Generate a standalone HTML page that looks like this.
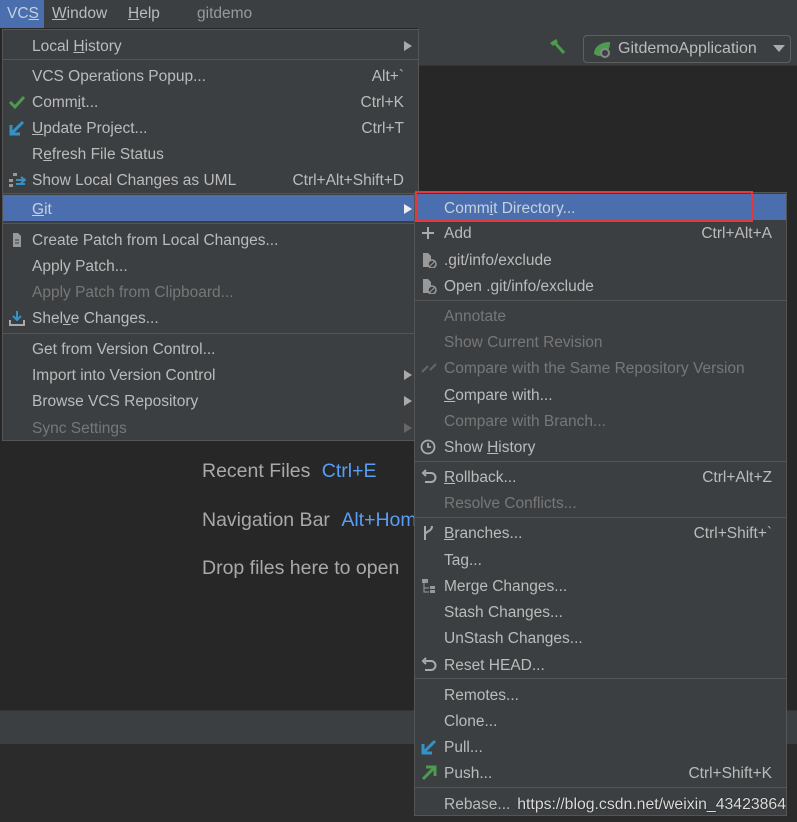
<!DOCTYPE html>
<html><head><meta charset="utf-8"><style>
*{margin:0;padding:0;box-sizing:border-box}
body{width:797px;height:822px;background:#272727;position:relative;overflow:hidden;font-family:"Liberation Sans","DejaVu Sans",sans-serif;font-size:15.5px;color:#bbbbbb}
.abs{position:absolute}
.mb{left:0;top:0;width:797px;height:28px;background:#3c3f41}
.mb span{position:absolute;top:4px;font-size:15.5px}
.menu{background:#3c3f41;border:1px solid #555}
.r{position:absolute;left:0;right:0;height:26px;line-height:29px;white-space:nowrap}
.r .t{position:absolute;left:29px}
.r .k{position:absolute;right:14px}
.r .a{position:absolute;right:6px;top:9px;width:0;height:0;border-left:8px solid #aaa;border-top:5px solid transparent;border-bottom:5px solid transparent}
.d{color:#777}
.d .a{border-left-color:#666}
.sel{background:#4b6eaf;color:#c8d0dc}
.sel .a{border-left-color:#eee}
.sep{position:absolute;left:0;right:0;height:1px;background:#555}
.ic{position:absolute;left:5px;top:6px;width:18px;height:16px}
</style></head><body>
<div class="abs" style="left:418px;top:28px;width:379px;height:38px;background:#3c3f41;border-bottom:1px solid #333"></div>
<div class="abs" style="left:0;top:710px;width:797px;height:34px;background:#3c3f41;border-top:1px solid #333"></div>
<div class="abs" style="left:0;top:744px;width:797px;height:78px;background:#2b2b2b"></div>
<svg class="abs" style="left:548px;top:38px" width="20" height="18"><path d="M2 5 L8 1 L10 4 L5 8Z" fill="#4b9c4b"/><path d="M7 5 L16 15" stroke="#4b9c4b" stroke-width="3"/></svg>
<div class="abs" style="left:583px;top:35px;width:208px;height:28px;border:1px solid #5e6060;border-radius:4px;background:#3c3f41"></div>
<svg class="abs" style="left:592px;top:40px" width="22" height="20"><path d="M2 14 C2 6 10 2 18 2 C18 10 14 16 6 16Z" fill="#4e9a4e"/><circle cx="13" cy="13" r="5" fill="#888"/><circle cx="13" cy="13" r="3" fill="#3c3f41"/></svg>
<div class="abs" style="left:618px;top:40px;font-size:16px">GitdemoApplication</div>
<div class="abs" style="left:773px;top:45px;border-top:7px solid #aaa;border-left:6px solid transparent;border-right:6px solid transparent"></div>
<div class="abs" style="left:202px;top:460px;font-size:19.5px;color:#a9a9a9">Recent Files <span style="color:#589df6;margin-left:6px">Ctrl+E</span></div>
<div class="abs" style="left:202px;top:509px;font-size:19.5px;color:#a9a9a9">Navigation Bar <span style="color:#589df6;margin-left:6px">Alt+Home</span></div>
<div class="abs" style="left:202px;top:557px;font-size:19.5px;color:#a9a9a9">Drop files here to open</div>

<div class="abs mb"></div>
<div class="abs" style="left:0;top:0;width:44px;height:28px;background:#4b6eaf"></div>
<div class="abs mb" style="background:none">
<span style="left:7px;top:5px;color:#c8d0dc">VC<u>S</u></span>
<span style="left:52px;top:5px"><u>W</u>indow</span>
<span style="left:128px;top:5px"><u>H</u>elp</span>
<span style="left:197px;top:5px;color:#999">gitdemo</span>
</div>

<div class="abs menu" style="left:2px;top:29px;width:417px;height:412px">
<div class="r" style="top:2px"><span class="t">Local <u>H</u>istory</span><span class="a"></span></div>
<div class="sep" style="top:29px"></div>
<div class="r" style="top:32px"><span class="t">VCS Operations Popup...</span><span class="k">Alt+`</span></div>
<div class="r" style="top:58px"><svg class="ic" viewBox="0 0 18 16"><path d="M2 8 L7 13 L16 3" stroke="#4e9a4e" stroke-width="3" fill="none"/></svg><span class="t">Comm<u>i</u>t...</span><span class="k">Ctrl+K</span></div>
<div class="r" style="top:84px"><svg class="ic" viewBox="0 0 18 16"><path d="M15 2 L4 13 M3 5 L3 14 L12 14" stroke="#3592c4" stroke-width="3" fill="none"/></svg><span class="t"><u>U</u>pdate Project...</span><span class="k">Ctrl+T</span></div>
<div class="r" style="top:110px"><span class="t">R<u>e</u>fresh File Status</span></div>
<div class="r" style="top:136px"><svg class="ic" viewBox="0 0 18 16"><rect x="5" y="1" width="4" height="3" fill="#999"/><rect x="1" y="7" width="4" height="3" fill="#999"/><rect x="1" y="12" width="4" height="3" fill="#999"/><path d="M8 8 L17 8 M13 5 L17 8 L13 11 M8 12 L17 12" stroke="#3592c4" stroke-width="2" fill="none"/></svg><span class="t">Show Local Changes as UML</span><span class="k">Ctrl+Alt+Shift+D</span></div>
<div class="sep" style="top:163px"></div>
<div class="r sel" style="top:165px"><span class="t"><u>G</u>it</span><span class="a"></span></div>
<div class="sep" style="top:193px"></div>
<div class="r" style="top:196px"><svg class="ic" viewBox="0 0 18 16"><path d="M5 1 H10 L13 4 V15 H5Z" fill="#999"/><path d="M7 8 H11 M7 11 H11" stroke="#3c3f41"/></svg><span class="t">Create Patch from Local Changes...</span></div>
<div class="r" style="top:222px"><span class="t">Apply Patch...</span></div>
<div class="r d" style="top:248px"><span class="t">Apply Patch from Clipboard...</span></div>
<div class="r" style="top:274px"><svg class="ic" viewBox="0 0 18 16"><path d="M9 1 V9 M5 6 L9 10 L13 6" stroke="#3592c4" stroke-width="2" fill="none"/><path d="M2 10 V15 H16 V10" stroke="#aaa" stroke-width="2" fill="none"/></svg><span class="t">Shel<u>v</u>e Changes...</span></div>
<div class="sep" style="top:303px"></div>
<div class="r" style="top:305px"><span class="t">Get from Version Control...</span></div>
<div class="r" style="top:331px"><span class="t">Import into Version Control</span><span class="a"></span></div>
<div class="r" style="top:357px"><span class="t">Browse VCS Repository</span><span class="a"></span></div>
<div class="r d" style="top:384px"><span class="t">Sync Settings</span><span class="a"></span></div>
</div>

<div class="abs menu" style="left:414px;top:192px;width:373px;height:624px">
<div class="r sel" style="top:1px"><span class="t">Comm<u>i</u>t Directory...</span></div>
<div class="r" style="top:26px"><svg class="ic" viewBox="0 0 18 16"><path d="M8 2 V14 M2 8 H14" stroke="#aaa" stroke-width="2"/></svg><span class="t">Add</span><span class="k">Ctrl+Alt+A</span></div>
<div class="r" style="top:53px"><svg class="ic" viewBox="0 0 18 16"><path d="M3 1 H8 L11 4 V15 H3Z" fill="#999"/><circle cx="12" cy="12" r="4" fill="#3c3f41" stroke="#999" stroke-width="1.5"/><path d="M9.5 14.5 L14.5 9.5" stroke="#999"/></svg><span class="t">.git/info/exclude</span></div>
<div class="r" style="top:79px"><svg class="ic" viewBox="0 0 18 16"><path d="M3 1 H8 L11 4 V15 H3Z" fill="#999"/><circle cx="12" cy="12" r="4" fill="#3c3f41" stroke="#999" stroke-width="1.5"/><path d="M9.5 14.5 L14.5 9.5" stroke="#999"/></svg><span class="t">Open .git/info/exclude</span></div>
<div class="sep" style="top:107px"></div>
<div class="r d" style="top:109px"><span class="t">Annotate</span></div>
<div class="r d" style="top:135px"><span class="t">Show Current Revision</span></div>
<div class="r d" style="top:161px"><svg class="ic" viewBox="0 0 18 16"><path d="M2 12 L8 6 M10 10 L16 4" stroke="#666" stroke-width="2"/></svg><span class="t">Compare with the Same Repository Version</span></div>
<div class="r" style="top:188px"><span class="t"><u>C</u>ompare with...</span></div>
<div class="r d" style="top:214px"><span class="t">Compare with Branch...</span></div>
<div class="r" style="top:240px"><svg class="ic" viewBox="0 0 18 16"><circle cx="8" cy="8" r="6.5" stroke="#aaa" stroke-width="1.8" fill="none"/><path d="M8 4 V8 H11" stroke="#aaa" stroke-width="1.8" fill="none"/></svg><span class="t">Show <u>H</u>istory</span></div>
<div class="sep" style="top:268px"></div>
<div class="r" style="top:270px"><svg class="ic" viewBox="0 0 18 16"><path d="M5 4 H11 A4.5 4.5 0 0 1 11 13 H5 M6 1 L3 4 L6 7" stroke="#aaa" stroke-width="2" fill="none"/></svg><span class="t"><u>R</u>ollback...</span><span class="k">Ctrl+Alt+Z</span></div>
<div class="r d" style="top:296px"><span class="t">Resolve Conflicts...</span></div>
<div class="sep" style="top:324px"></div>
<div class="r" style="top:326px"><svg class="ic" viewBox="0 0 18 16"><path d="M5 1 V15 M5 10 C5 6 12 7 12 1" stroke="#aaa" stroke-width="2" fill="none"/></svg><span class="t"><u>B</u>ranches...</span><span class="k">Ctrl+Shift+`</span></div>
<div class="r" style="top:353px"><span class="t">Tag...</span></div>
<div class="r" style="top:379px"><svg class="ic" viewBox="0 0 18 16"><rect x="2" y="1" width="6" height="4" fill="#999"/><path d="M4 5 V14 H9 M4 10 H9" stroke="#999" fill="none"/><rect x="10" y="8" width="5" height="3" fill="#999"/><rect x="10" y="12" width="5" height="3" fill="#999"/></svg><span class="t">Merge Changes...</span></div>
<div class="r" style="top:405px"><span class="t">Stash Changes...</span></div>
<div class="r" style="top:431px"><span class="t">UnStash Changes...</span></div>
<div class="r" style="top:458px"><svg class="ic" viewBox="0 0 18 16"><path d="M5 4 H11 A4.5 4.5 0 0 1 11 13 H5 M6 1 L3 4 L6 7" stroke="#aaa" stroke-width="2" fill="none"/></svg><span class="t">Reset HEAD...</span></div>
<div class="sep" style="top:485px"></div>
<div class="r" style="top:488px"><span class="t">Remotes...</span></div>
<div class="r" style="top:514px"><span class="t">Clone...</span></div>
<div class="r" style="top:540px"><svg class="ic" viewBox="0 0 18 16"><path d="M15 2 L4 13 M3 5 L3 14 L12 14" stroke="#3592c4" stroke-width="3" fill="none"/></svg><span class="t">Pull...</span></div>
<div class="r" style="top:566px"><svg class="ic" viewBox="0 0 18 16"><path d="M3 14 L14 3 M6 2 L15 2 L15 11" stroke="#4e9a4e" stroke-width="3" fill="none"/></svg><span class="t">Push...</span><span class="k">Ctrl+Shift+K</span></div>
<div class="sep" style="top:594px"></div>
<div class="r" style="top:597px"><span class="t">Rebase...</span><span class="k" style="right:0;color:#ddd;font-size:15.8px;text-shadow:0 0 1px #000">https://blog.csdn.net/weixin_43423864</span></div>
</div>
<div class="abs" style="left:415px;top:191px;width:338px;height:31px;border:2px solid #e8373b"></div>
</body></html>
